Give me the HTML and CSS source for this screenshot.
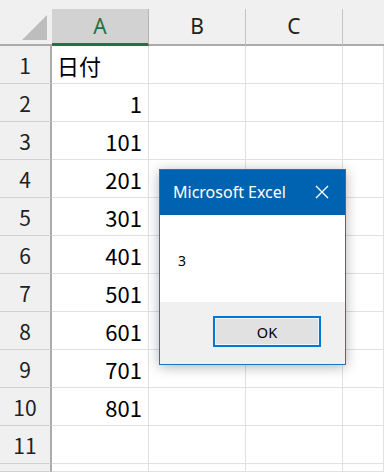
FILE: index.html
```html
<!DOCTYPE html>
<html lang="ja">
  <head>
    <meta charset="UTF-8" />
    <meta name="viewport" content="width=device-width, initial-scale=1.0" />
    <title>Microsoft Excel</title>
    <link rel="stylesheet" href="styles.css">
  </head>
  <body>
    <div class="topbar"></div>
    <div class="sheet">
      <div class="corner">
        <svg width="25" height="25" viewBox="0 0 25 25"><polygon points="0,25 25,25 25,0" fill="#bdbdbd"/></svg>
      </div>
      <div class="col-head selected">A</div>
      <div class="col-head">B</div>
      <div class="col-head">C</div>
      <div class="col-head last"></div>

      <div class="row-head">1</div>
      <div class="cell jp">日付</div><div class="cell"></div><div class="cell"></div><div class="cell"></div>

      <div class="row-head">2</div>
      <div class="cell num">1</div><div class="cell"></div><div class="cell"></div><div class="cell"></div>

      <div class="row-head">3</div>
      <div class="cell num">101</div><div class="cell"></div><div class="cell"></div><div class="cell"></div>

      <div class="row-head">4</div>
      <div class="cell num">201</div><div class="cell"></div><div class="cell"></div><div class="cell"></div>

      <div class="row-head">5</div>
      <div class="cell num">301</div><div class="cell"></div><div class="cell"></div><div class="cell"></div>

      <div class="row-head">6</div>
      <div class="cell num">401</div><div class="cell"></div><div class="cell"></div><div class="cell"></div>

      <div class="row-head">7</div>
      <div class="cell num">501</div><div class="cell"></div><div class="cell"></div><div class="cell"></div>

      <div class="row-head">8</div>
      <div class="cell num">601</div><div class="cell"></div><div class="cell"></div><div class="cell"></div>

      <div class="row-head">9</div>
      <div class="cell num">701</div><div class="cell"></div><div class="cell"></div><div class="cell"></div>

      <div class="row-head">10</div>
      <div class="cell num">801</div><div class="cell"></div><div class="cell"></div><div class="cell"></div>

      <div class="row-head">11</div>
      <div class="cell"></div><div class="cell"></div><div class="cell"></div><div class="cell"></div>

      <!-- row 12 is only a sliver at the bottom edge -->
      <div class="row-head"></div>
      <div class="cell"></div><div class="cell"></div><div class="cell"></div><div class="cell"></div>
    </div>

    <div class="msgbox">
      <div class="msgbox-title">
        <span>Microsoft Excel</span>
        <svg class="close" width="14" height="14" viewBox="0 0 14 14">
          <path d="M1 1 L13 13 M13 1 L1 13" stroke="#fff" stroke-width="1.4" fill="none"/>
        </svg>
      </div>
      <div class="msgbox-body">3</div>
      <div class="msgbox-footer">
        <button class="ok-btn">OK</button>
      </div>
    </div>
  </body>
</html>
```

FILE: styles.css
```css
* {
  margin: 0;
  padding: 0;
  box-sizing: border-box;
}

body {
  width: 384px;
  height: 472px;
  overflow: hidden;
  background-color: #fff;
  font-family: "Noto Sans CJK JP", "Noto Sans", sans-serif;
  color: #000;
}

.topbar {
  height: 9px;
  background-color: #f0f0f0;
}

.sheet {
  display: grid;
  grid-template-columns: 52px 97px 97px 97px 1fr;
  grid-template-rows: 37px repeat(11, 38px) 8px;
}

.corner {
  background-color: #f0f0f0;
  border-bottom: 2px solid #ababab;
  display: flex;
  justify-content: flex-end;
  align-items: flex-end;
  padding: 0 5px 4px 0;
}

.corner svg {
  display: block;
}

.col-head {
  background-color: #f0f0f0;
  border-right: 1px solid #c4c4c4;
  border-bottom: 2px solid #ababab;
  display: flex;
  justify-content: center;
  align-items: center;
  font-family: "Noto Sans", sans-serif;
  font-size: 21px;
  color: #222;
  padding-bottom: 1px;
}

.col-head.selected {
  background-color: #d2d2d2;
  color: #217346;
  border-bottom: 3px solid #217346;
  border-right-color: #b4b4b4;
}

.col-head.last {
  border-right: none;
}

.row-head {
  background-color: #f0f0f0;
  border-right: 2px solid #ababab;
  border-bottom: 1px solid #d0d0d0;
  display: flex;
  justify-content: center;
  align-items: center;
  font-size: 21px;
  color: #222;
}

.cell {
  border-right: 1px solid #e1e1e1;
  border-bottom: 1px solid #e1e1e1;
  display: flex;
  align-items: center;
  padding: 0 6px;
  font-size: 22px;
}

.cell.num {
  justify-content: flex-end;
}

.cell.jp {
  padding-left: 5px;
}

.msgbox {
  position: absolute;
  left: 159px;
  top: 169px;
  width: 187px;
  height: 196px;
  border: 1px solid #1e74c6;
  background-color: #f0f0f0;
  box-shadow: 0 2px 12px rgba(0, 0, 0, 0.3);
  display: flex;
  flex-direction: column;
}

.msgbox-title {
  height: 45px;
  background-color: #0063b1;
  color: #fff;
  display: flex;
  align-items: center;
  justify-content: space-between;
  padding: 0 16px 2px 13px;
  font-family: "Noto Sans", sans-serif;
  font-size: 16px;
}

.close {
  display: block;
}

.msgbox-body {
  height: 87px;
  background-color: #fff;
  display: flex;
  align-items: center;
  padding: 3px 0 0 18px;
  font-family: "Noto Sans", sans-serif;
  font-size: 14px;
}

.msgbox-footer {
  flex: 1;
  display: flex;
  justify-content: flex-end;
  align-items: flex-start;
  padding: 14px 24px 0 0;
}

.ok-btn {
  width: 108px;
  height: 31px;
  border: 2px solid #0078d7;
  background-color: #e1e1e1;
  font-family: "Noto Sans", sans-serif;
  font-size: 14.5px;
  color: #000;
  box-shadow: inset 0 0 0 1px #f3f3f3;
}
```
